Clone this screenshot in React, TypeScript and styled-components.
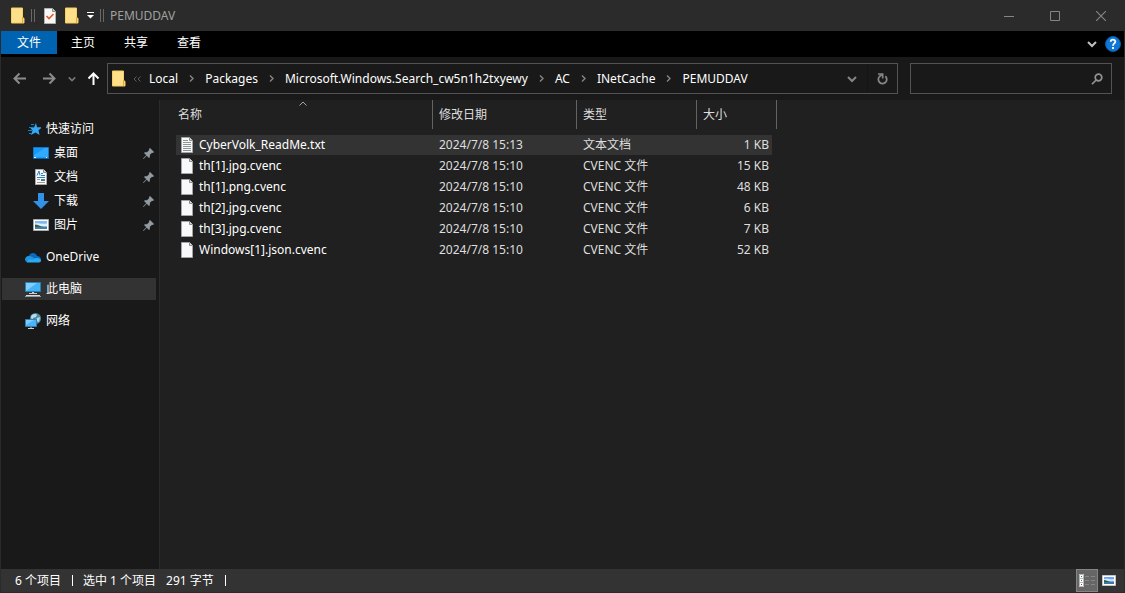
import React from "react";
import styled, { createGlobalStyle, css } from "styled-components";

const GlobalStyle = createGlobalStyle`
  * { box-sizing: border-box; }
  body {
    margin: 0;
    background: #202020;
    color: #fff;
    font: 12px/16px "Noto Sans", "Noto Sans CJK SC", sans-serif;
  }
  button, input { font: inherit; color: inherit; }
  svg { display: block; flex: none; }
`;

const plainButton = css`
  display: flex;
  align-items: center;
  justify-content: center;
  padding: 0;
  border: 0;
  background: none;
`;

const Window = styled.div`
  display: flex;
  flex-direction: column;
  min-height: 100vh;
  border: solid #2b2b2b;
  border-width: 0 1px 1px;
`;

const TitleBar = styled.header`
  display: flex;
  align-items: center;
  height: 31px;
  padding-left: 10px;
  background: #2b2b2b;
`;

const TitleGroup = styled.div`
  display: flex;
  align-items: center;
  gap: 6px;
`;

const QuickButton = styled.button<{ $width?: number }>`
  ${plainButton}
  width: ${(p) => p.$width ?? 14}px;
  height: 24px;
`;

const DoubleBar = styled.span`
  width: 4px;
  height: 13px;
  border: solid #686868;
  border-width: 0 1px;
`;

const QuickAccess = styled.div`
  display: flex;
  align-items: center;
  gap: 8px;
  margin: 0 6px 0 8px;
`;

const WindowTitle = styled.h1`
  flex: 1;
  margin: 0 0 0 6px;
  color: #a0a0a0;
  font-size: 12px;
  font-weight: 400;
`;

const CaptionButton = styled.button`
  ${plainButton}
  width: 46px;
  height: 31px;
`;

const Ribbon = styled.nav`
  display: flex;
  align-items: flex-start;
  height: 26px;
  background: #000;
`;

const RibbonTab = styled.button<{ $active?: boolean }>`
  ${plainButton}
  width: ${(p) => (p.$active ? 56 : 52)}px;
  height: 23px;
  margin-right: ${(p) => (p.$active ? 0 : 1)}px;
  padding-top: 1px;
  background: ${(p) => (p.$active ? "#0063b1" : "transparent")};
`;

const RibbonTools = styled.div`
  display: flex;
  align-items: center;
  gap: 8px;
  height: 26px;
  margin-left: auto;
  padding-right: 3px;
`;

const IconButton = styled.button`
  ${plainButton}
`;

const NavBar = styled.div`
  display: flex;
  align-items: center;
  height: 43px;
  padding: 0 12px 0 3px;
  background: #191919;
`;

const NavButton = styled.button<{ $width: number }>`
  ${plainButton}
  width: ${(p) => p.$width}px;
  height: 30px;
`;

const AddressBar = styled.div`
  display: flex;
  align-items: center;
  flex: 1;
  min-width: 0;
  height: 31px;
  margin: 0 12px 0 1px;
  padding-left: 4px;
  border: 1px solid #535353;
`;

const Crumbs = styled.ol`
  display: flex;
  align-items: center;
  flex: 1;
  min-width: 0;
  margin: 0 0 0 7px;
  padding: 0;
  overflow: hidden;
  list-style: none;
`;

const Crumb = styled.li`
  display: flex;
  align-items: center;
`;

const CrumbMark = styled.span<{ $width: number }>`
  display: flex;
  justify-content: center;
  width: ${(p) => p.$width}px;
`;

const CrumbLink = styled.a`
  color: #fff;
  text-decoration: none;
`;

const AddressButton = styled.button<{ $divided?: boolean }>`
  ${plainButton}
  width: 30px;
  height: 29px;
  border-left: ${(p) => (p.$divided ? "1px solid #151515" : "0")};
`;

const SearchBox = styled.form`
  display: flex;
  align-items: center;
  width: 202px;
  height: 31px;
  padding-right: 8px;
  border: 1px solid #535353;
`;

const SearchInput = styled.input`
  flex: 1;
  min-width: 0;
  height: 28px;
  padding: 0 6px;
  border: 0;
  outline: 0;
  background: none;
`;

const Body = styled.div`
  display: flex;
  flex: 1;
`;

const Sidebar = styled.aside`
  width: 159px;
  padding: 17px 3px 0 1px;
  border-right: 1px solid #2b2b2b;
  background: #191919;
`;

const NavGroup = styled.ul`
  margin: 0 0 8px;
  padding: 0;
  list-style: none;
`;

const NavItem = styled.a<{ $nested?: boolean; $selected?: boolean }>`
  display: flex;
  align-items: center;
  gap: 5px;
  height: 24px;
  padding: 0 2px 0 ${(p) => (p.$nested ? 31 : 23)}px;
  border: solid #191919;
  border-width: 1px 0;
  background: ${(p) => (p.$selected ? "#333" : "transparent")};
  color: #fff;
  text-decoration: none;

  span {
    flex: 1;
  }
`;

const Main = styled.main`
  flex: 1;
  min-width: 0;
  padding-left: 16px;
  background: #202020;
`;

const FileTable = styled.table`
  width: 601px;
  border-spacing: 0;
  table-layout: fixed;
  color: #dedede;

  tbody::before {
    display: block;
    height: 6px;
    content: "";
  }
`;

const HeadCell = styled.th`
  position: relative;
  height: 29px;
  padding: 0;
  border-right: 1px solid #636363;
  font-weight: 400;
`;

const SortButton = styled.button<{ $first?: boolean }>`
  ${plainButton}
  justify-content: flex-start;
  width: 100%;
  height: 29px;
  padding-left: ${(p) => (p.$first ? 2 : 6)}px;
`;

const SortMark = styled.span`
  position: absolute;
  top: 1px;
  right: 2px;
  left: 0;
  display: flex;
  justify-content: center;
`;

const FileRow = styled.tr<{ $selected?: boolean }>`
  background: ${(p) => (p.$selected ? "#333" : "#202020")};

  td:last-child {
    background: #202020;
  }
`;

const Cell = styled.td<{ $end?: boolean }>`
  height: 21px;
  padding: 0 ${(p) => (p.$end ? 3 : 0)}px 0 6px;
  border-bottom: 1px solid #202020;
  text-align: ${(p) => (p.$end ? "right" : "left")};
  white-space: nowrap;
`;

const NameCell = styled(Cell)`
  padding-left: 4px;
  color: #fff;
`;

const FileName = styled.div`
  display: flex;
  align-items: flex-start;
  gap: 5px;
  height: 17px;
`;

const StatusBar = styled.footer`
  display: flex;
  align-items: center;
  height: 23px;
  padding-left: 14px;
  background: #333;
`;

const StatusText = styled.span`
  margin-right: 10px;
`;

const StatusRule = styled.span`
  width: 1px;
  height: 11px;
  margin: 0 10px 0 1px;
  background: #fff;
`;

const ViewSwitch = styled.div`
  display: flex;
  margin-left: auto;
  padding-right: 4px;
`;

const ViewButton = styled.button<{ $active?: boolean }>`
  ${plainButton}
  width: 22px;
  height: 23px;
  border: ${(p) => (p.$active ? "1px solid #858585" : "0")};
  background: ${(p) => (p.$active ? "#666" : "transparent")};
`;

const FolderIcon = () => (
  <svg width="14" height="17" viewBox="0 0 14 17">
    <path d="M.5 1h11v9.5l1.500.8V16H.5z" fill="#ffe08a" stroke="#f5cf63" />
    <path d="M11.500 10v6" stroke="#e0ac32" />
  </svg>
);

const PageIcon = ({ lines }: { lines?: boolean }) => (
  <svg width="14" height="16" viewBox="0 0 14 16">
    <path d="M1.500.500h8l3 3v12h-11z" fill="#f8f9fa" stroke="#a5a5a5" />
    <path d="M9.500.500v3h3" fill="#ddd" stroke="#8d8d8d" />
    {lines && <path d="M3 3.500h5M3 5.500h8M3 7.500h8M3 9.500h8M3 11.500h8M3 13.500h8" stroke="#8e9396" />}
  </svg>
);

const CheckPageIcon = () => (
  <svg width="12" height="16" viewBox="0 0 12 16">
    <path d="M.5.500h8l3 3v12H.5z" fill="#f7f7f7" stroke="#b0b0b0" />
    <path d="M8.500.500v3h3" fill="#ccc" stroke="#888" />
    <path d="m2.500 8 2.500 2.500L9.500 6" fill="none" stroke="#e25a24" strokeWidth="1.600" />
  </svg>
);

const CustomizeIcon = () => (
  <svg width="7" height="7" viewBox="0 0 7 7">
    <path d="M0 .5h7" stroke="#fff" />
    <path d="M0 3h7L3.500 6.500z" fill="#fff" />
  </svg>
);

const ArrowIcon = ({ turn, color }: { turn: number; color: string }) => (
  <svg width="13" height="13" viewBox="0 0 13 13">
    <path
      d="M13 6.500H1.500M6.500 1.500l-5 5 5 5"
      fill="none"
      stroke={color}
      strokeWidth="2"
      transform={`rotate(${turn} 6.500 6.500)`}
    />
  </svg>
);

const ChevronIcon = ({ size, color, thick = 2 }: { size: number; color: string; thick?: number }) => (
  <svg width={size} height={size} viewBox="0 0 10 10">
    <path d="m1 3 4 4 4-4" fill="none" stroke={color} strokeWidth={thick} />
  </svg>
);

const CrumbArrow = () => (
  <svg width="5" height="7" viewBox="0 0 5 7">
    <path d="m1 .5 3 3-3 3" fill="none" stroke="#858585" strokeWidth="1.400" />
  </svg>
);

const OverflowArrows = () => (
  <svg width="8" height="6" viewBox="0 0 8 6">
    <path d="M3.500.500 1 3l2.500 2.500M7.500.500 5 3l2.500 2.500" fill="none" stroke="#5c5c5c" />
  </svg>
);

const RefreshIcon = () => (
  <svg width="11" height="12" viewBox="0 0 11 12">
    <path d="M8.300 3.200A4.200 4.200 0 1 1 2.500 3.500L5 1.500" fill="none" stroke="#858585" strokeWidth="1.800" />
    <path d="M1 1h4.700v4.500" fill="none" stroke="#858585" strokeWidth="1.600" />
  </svg>
);

const SearchIcon = () => (
  <svg width="12" height="12" viewBox="0 0 12 12">
    <circle cx="7.500" cy="4.500" r="3.300" fill="none" stroke="#929292" strokeWidth="1.700" />
    <path d="M5.200 7 1 11.200" stroke="#929292" strokeWidth="1.700" />
  </svg>
);

const HelpIcon = () => (
  <svg width="16" height="16" viewBox="0 0 16 16">
    <circle cx="8" cy="8" r="7.500" fill="#0f78d7" stroke="#0a59a8" />
    <path
      d="M5.700 5.700C5.800 3 10.400 3 10.300 5.800 10.200 7.500 8 7.400 8 9.800"
      fill="none"
      stroke="#fff"
      strokeWidth="1.800"
    />
    <path d="M7 11h2v2H7z" fill="#fff" />
  </svg>
);

const MinimizeIcon = () => (
  <svg width="10" height="10" viewBox="0 0 10 10">
    <path d="M0 5.500h10" stroke="#858585" />
  </svg>
);

const MaximizeIcon = () => (
  <svg width="10" height="10" viewBox="0 0 10 10">
    <path d="M.5.500h9v9h-9z" fill="none" stroke="#858585" />
  </svg>
);

const CloseIcon = () => (
  <svg width="10" height="10" viewBox="0 0 10 10">
    <path d="m0 0 10 10M10 0 0 10" stroke="#858585" strokeWidth="1.200" />
  </svg>
);

const StarIcon = () => (
  <svg width="16" height="16" viewBox="0 0 16 16">
    <path d="m11 2 1 4.300h5l-3.500 2.900 1 4.800-4-2.500L6 14l1.500-4.500L5 6.500h4z" fill="#35a9f3" />
    <path d="M6 3.500h3M4 6.500h4M3 9.500h4M4 12.500h3" stroke="#1982cc" />
  </svg>
);

const DesktopIcon = () => (
  <svg width="16" height="16" viewBox="0 0 16 16">
    <path d="M.5 2.500h15v11H.5z" fill="#1599fb" stroke="#1277c7" />
    <path d="M1 10 12 3h3v9H1z" fill="#31aaff" />
    <path d="M0 13.500h16" stroke="#0864ae" />
    <path d="M1 12.500h2M13 12.500h1" stroke="#fff" />
  </svg>
);

const DocumentIcon = () => (
  <svg width="16" height="16" viewBox="0 0 16 16">
    <path d="M2.500.500h8l3 3v12h-11z" fill="#f9f9f9" stroke="#aaa" />
    <path d="M10.500.500v3h3" fill="#ddd" stroke="#888" />
    <path d="M4 6.500 6 2l1 4.500M8 4.500h2M8 6.500h4M4 8.500h8" fill="none" stroke="#2680c6" />
    <path d="M4 10.500h3M4 13.500h8" stroke="#9a9a9a" />
    <path d="M8 10h4v1H8z" fill="#3b8dbb" />
    <path d="M8 11h4v1H8z" fill="#4a7d55" />
  </svg>
);

const DownloadIcon = () => (
  <svg width="16" height="16" viewBox="0 0 16 16">
    <path d="M5 0h6v8h5l-8 8-8-8h5z" fill="#3292e7" />
  </svg>
);

const PictureIcon = () => (
  <svg width="16" height="16" viewBox="0 0 16 16">
    <path d="M.5 2.500h15v11H.5z" fill="#fff" stroke="#aaa" />
    <path d="M2 4h12v8H2z" fill="#80baf2" />
    <path d="M2 6.500c3-1 5 1 12 0V9H2z" fill="#e1f0f7" />
    <path d="M2 7.500c3 0 5 2 9 2.500H2z" fill="#365f53" />
    <path d="M2 10h12v2H2z" fill="#487f9f" />
  </svg>
);

const LargeIconsIcon = () => (
  <svg width="14" height="11" viewBox="0 0 14 11">
    <path d="M.5.500h13v10H.5z" fill="#fff" stroke="#c9c4bf" />
    <path d="M2 2h10v7H2z" fill="#6ea4f4" />
    <path d="M2 4c4-1 6 1 10 0v2H2z" fill="#d5e8f8" />
    <path d="M2 5c2 0 4 1 6 2H2z" fill="#2e6244" />
    <path d="M2 7h10v2H2z" fill="#4177a8" />
  </svg>
);

const CloudIcon = () => (
  <svg width="16" height="16" viewBox="0 0 16 16">
    <path d="M1 13C-1 10 1 7 4 7c1-4 7-4 8 0 4 0 5 4 3 6z" fill="#096ac4" />
    <path d="M1 12c-2-2 0-5 3-5 2 0 4 1 6 3z" fill="#2395df" />
    <path d="M2 13.500c-1-1 2-4 6-3 4-3 8-1 8 1 0 1-1 2-2 2z" fill="#29aaf1" />
  </svg>
);

const ComputerIcon = () => (
  <svg width="16" height="16" viewBox="0 0 16 16">
    <path d="M.5 1.500h15v9H.5z" fill="#45b3f7" stroke="#297fad" />
    <path d="M1 2h11L1 10z" fill="#82cefa" />
    <path d="M7 11.500h2M4 12.500h8" stroke="#c5d2d8" />
    <path d="M1 14.500h14" stroke="#d4dde1" />
    <path d="M0 15.500h16" stroke="#8a9ba3" />
  </svg>
);

const NetworkIcon = () => (
  <svg width="16" height="16" viewBox="0 0 16 16">
    <circle cx="10.500" cy="5.500" r="5.500" fill="#4c8ba5" />
    <path d="M6 4c0-3 5-4 6-2l-1 2-3 1-1 3zM12 5l3-1-1 5-3-1z" fill="#b5dce8" />
    <path d="M.5 6.500h11v7H.5z" fill="#49b4fb" stroke="#347ea8" />
    <path d="M1 7h8l-8 5z" fill="#7accff" />
    <path d="M3 15.500h6M6 14v1" stroke="#c9d4d9" />
  </svg>
);

const PinIcon = () => (
  <svg width="11" height="11" viewBox="0 0 11 11">
    <path d="m7 0 4 4-1 1-1-.2L6.800 7v2.200L6 10 3.700 7.700.500 11 0 10.500l3.300-3.200L1 5l.8-.8H4L6.200 2 6 1z" fill="#919ca2" />
  </svg>
);

const DetailsIcon = () => (
  <svg width="16" height="13" viewBox="0 0 16 13">
    <path d="M0 0h5v13H0z" fill="#fff" />
    <path d="M.5.500h4v12h-4zM0 4.500h5M0 8.500h5" fill="none" stroke="#b5b5b5" />
    <path d="M2 2h1v1H2z" fill="#278045" />
    <path d="M2 6h1v1H2z" fill="#287bcc" />
    <path d="M2 10h1v1H2z" fill="#c22a2a" />
    <path d="M6 2.500h4M12 2.500h4M6 6.500h4M12 6.500h4M6 10.500h4M12 10.500h4" stroke="#858585" />
  </svg>
);

const SortUpIcon = () => (
  <svg width="8" height="5" viewBox="0 0 8 5">
    <path d="m.5 4.500 3.500-3.500 3.500 3.500" fill="none" stroke="#a5a5a5" />
  </svg>
);

const crumbs = ["Local", "Packages", "Microsoft.Windows.Search_cw5n1h2txyewy", "AC", "INetCache", "PEMUDDAV"];

interface Place {
  label: string;
  icon: React.ReactNode;
  pinned?: boolean;
  selected?: boolean;
}

const groups: Place[][] = [
  [
    { label: "快速访问", icon: <StarIcon /> },
    { label: "桌面", icon: <DesktopIcon />, pinned: true },
    { label: "文档", icon: <DocumentIcon />, pinned: true },
    { label: "下载", icon: <DownloadIcon />, pinned: true },
    { label: "图片", icon: <PictureIcon />, pinned: true },
  ],
  [{ label: "OneDrive", icon: <CloudIcon /> }],
  [{ label: "此电脑", icon: <ComputerIcon />, selected: true }],
  [{ label: "网络", icon: <NetworkIcon /> }],
];

const files = [
  { name: "CyberVolk_ReadMe.txt", date: "2024/7/8 15:13", type: "文本文档", size: "1 KB", text: true },
  { name: "th[1].jpg.cvenc", date: "2024/7/8 15:10", type: "CVENC 文件", size: "15 KB" },
  { name: "th[1].png.cvenc", date: "2024/7/8 15:10", type: "CVENC 文件", size: "48 KB" },
  { name: "th[2].jpg.cvenc", date: "2024/7/8 15:10", type: "CVENC 文件", size: "6 KB" },
  { name: "th[3].jpg.cvenc", date: "2024/7/8 15:10", type: "CVENC 文件", size: "7 KB" },
  { name: "Windows[1].json.cvenc", date: "2024/7/8 15:10", type: "CVENC 文件", size: "52 KB" },
];

export default function App() {
  return (
    <>
      <GlobalStyle />
      <Window>
        <TitleBar>
          <TitleGroup>
            <FolderIcon />
            <DoubleBar />
          </TitleGroup>
          <QuickAccess>
            <QuickButton aria-label="属性">
              <CheckPageIcon />
            </QuickButton>
            <QuickButton aria-label="新建文件夹">
              <FolderIcon />
            </QuickButton>
            <QuickButton $width={7} aria-label="自定义快速访问工具栏">
              <CustomizeIcon />
            </QuickButton>
          </QuickAccess>
          <DoubleBar />
          <WindowTitle>PEMUDDAV</WindowTitle>
          <CaptionButton aria-label="最小化">
            <MinimizeIcon />
          </CaptionButton>
          <CaptionButton aria-label="最大化">
            <MaximizeIcon />
          </CaptionButton>
          <CaptionButton aria-label="关闭">
            <CloseIcon />
          </CaptionButton>
        </TitleBar>

        <Ribbon>
          <RibbonTab $active>文件</RibbonTab>
          <RibbonTab>主页</RibbonTab>
          <RibbonTab>共享</RibbonTab>
          <RibbonTab>查看</RibbonTab>
          <RibbonTools>
            <IconButton aria-label="展开功能区">
              <ChevronIcon size={10} color="#c0c0c0" thick={2} />
            </IconButton>
            <IconButton aria-label="帮助">
              <HelpIcon />
            </IconButton>
          </RibbonTools>
        </Ribbon>

        <NavBar>
          <NavButton $width={30} aria-label="返回">
            <ArrowIcon turn={0} color="#8b8b8b" />
          </NavButton>
          <NavButton $width={30} aria-label="前进">
            <ArrowIcon turn={180} color="#8b8b8b" />
          </NavButton>
          <NavButton $width={16} aria-label="最近的位置">
            <ChevronIcon size={8} color="#777" />
          </NavButton>
          <NavButton $width={26} aria-label="向上">
            <ArrowIcon turn={90} color="#fff" />
          </NavButton>
          <AddressBar>
            <FolderIcon />
            <Crumbs>
              <Crumb>
                <OverflowArrows />
                <CrumbMark $width={8} />
              </Crumb>
              {crumbs.map((name, i) => (
                <Crumb key={name}>
                  {i > 0 && (
                    <CrumbMark $width={27}>
                      <CrumbArrow />
                    </CrumbMark>
                  )}
                  <CrumbLink href="#">{name}</CrumbLink>
                </Crumb>
              ))}
            </Crumbs>
            <AddressButton aria-label="历史记录">
              <ChevronIcon size={10} color="#858585" />
            </AddressButton>
            <AddressButton $divided aria-label="刷新">
              <RefreshIcon />
            </AddressButton>
          </AddressBar>
          <SearchBox role="search">
            <SearchInput type="text" aria-label="搜索" />
            <IconButton type="button" aria-label="开始搜索">
              <SearchIcon />
            </IconButton>
          </SearchBox>
        </NavBar>

        <Body>
          <Sidebar>
            {groups.map((group) => (
              <NavGroup key={group[0].label}>
                {group.map((item) => (
                  <li key={item.label}>
                    <NavItem href="#" $nested={item.pinned} $selected={item.selected}>
                      {item.icon}
                      <span>{item.label}</span>
                      {item.pinned && <PinIcon />}
                    </NavItem>
                  </li>
                ))}
              </NavGroup>
            ))}
          </Sidebar>
          <Main>
            <FileTable>
              <colgroup>
                <col style={{ width: 257 }} />
                <col style={{ width: 144 }} />
                <col style={{ width: 120 }} />
                <col style={{ width: 75 }} />
                <col style={{ width: 5 }} />
              </colgroup>
              <thead>
                <tr>
                  <HeadCell aria-sort="ascending">
                    <SortButton $first>名称</SortButton>
                    <SortMark>
                      <SortUpIcon />
                    </SortMark>
                  </HeadCell>
                  <HeadCell>
                    <SortButton>修改日期</SortButton>
                  </HeadCell>
                  <HeadCell>
                    <SortButton>类型</SortButton>
                  </HeadCell>
                  <HeadCell colSpan={2}>
                    <SortButton>大小</SortButton>
                  </HeadCell>
                </tr>
              </thead>
              <tbody>
                {files.map((file) => (
                  <FileRow key={file.name} $selected={file.text}>
                    <NameCell>
                      <FileName>
                        <PageIcon lines={file.text} />
                        {file.name}
                      </FileName>
                    </NameCell>
                    <Cell>{file.date}</Cell>
                    <Cell>{file.type}</Cell>
                    <Cell $end>{file.size}</Cell>
                    <td />
                  </FileRow>
                ))}
              </tbody>
            </FileTable>
          </Main>
        </Body>

        <StatusBar>
          <StatusText>6 个项目</StatusText>
          <StatusRule />
          <StatusText>选中 1 个项目</StatusText>
          <StatusText>291 字节</StatusText>
          <StatusRule />
          <ViewSwitch>
            <ViewButton $active aria-label="详细信息">
              <DetailsIcon />
            </ViewButton>
            <ViewButton aria-label="大图标">
              <LargeIconsIcon />
            </ViewButton>
          </ViewSwitch>
        </StatusBar>
      </Window>
    </>
  );
}
